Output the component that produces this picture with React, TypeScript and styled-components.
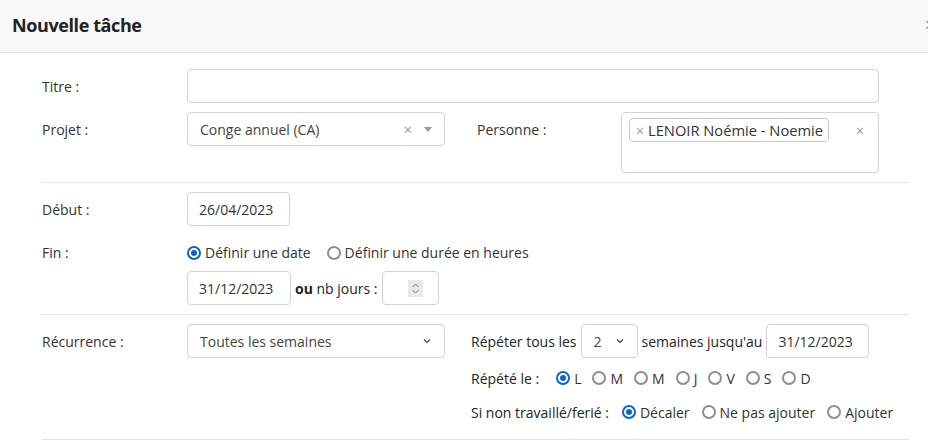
import React from "react";
import styled, { createGlobalStyle } from "styled-components";

const Global = createGlobalStyle`
  html, body { margin: 0; padding: 0; background: #fff; }
  body { font-family: "Open Sans", "Noto Sans", sans-serif; font-size: 14px; color: #212529; overflow: hidden; }
  * { box-sizing: border-box; }
`;

const Modal = styled.div`
  width: 928px;
  height: 441px;
  overflow: hidden;
  background: #fff;
`;

const Header = styled.div`
  height: 53px;
  background: #f8f8f8;
  border-bottom: 1px solid #e5e5e5;
  display: flex;
  align-items: center;
  justify-content: space-between;
  padding: 0 0 3px 12px;
`;

const Title = styled.h4`
  margin: 0;
  font-size: 18px;
  font-weight: 700;
  letter-spacing: -0.4px;
  color: #222;
`;

const Close = styled.span`
  font-size: 20px;
  color: #999;
  margin-right: -8px;
  line-height: 1;
`;

const Body = styled.div`
  padding: 16px 19px 0 42px;
`;

const Section = styled.div<{ $pb?: number }>`
  border-bottom: 1px solid #e3e3e3;
  padding: 0 0 ${(p) => p.$pb ?? 9}px;
  margin-bottom: 9px;
`;

const Grid = styled.div`
  display: grid;
  grid-template-columns: 145px 258px 32px 144px 258px;
  row-gap: 9px;
  align-items: start;
`;

const Label = styled.div<{ $h?: number }>`
  height: ${(p) => p.$h ?? 34}px;
  display: flex;
  align-items: center;
  color: #333;
  white-space: nowrap;
`;

const Input = styled.div<{ $w?: number; $h?: number; $span?: string }>`
  ${(p) => (p.$span ? `grid-column: ${p.$span};` : "")}
  width: ${(p) => (p.$w ? `${p.$w}px` : "auto")};
  height: ${(p) => p.$h ?? 34}px;
  border: 1px solid #cfd4da;
  border-radius: 4px;
  background: #fff;
  display: flex;
  align-items: center;
  padding: 0 11px;
  color: #333;
  white-space: nowrap;
  flex-shrink: 0;
`;

const Select2 = styled(Input)`
  padding: 0 12px;
  color: #444;
  justify-content: space-between;
`;

const Icons = styled.span`
  display: flex;
  align-items: center;
  gap: 12px;
  color: #999;
  font-size: 15px;
`;

const Caret = styled.span`
  width: 0;
  height: 0;
  border-left: 4px solid transparent;
  border-right: 4px solid transparent;
  border-top: 5px solid #999;
`;

const Multi = styled(Input)`
  align-items: flex-start;
  padding: 5px 14px 0 7px;
  justify-content: space-between;
`;

const Tag = styled.span`
  border: 1px solid #c8c8c8;
  border-radius: 4px;
  padding: 0 5px 0 6px;
  height: 24px;
  display: flex;
  align-items: center;
  gap: 4px;
  color: #333;
  font-size: 14.7px;
`;

const TagX = styled.span<{ $mt?: number }>`
  color: #999;
  font-size: 14px;
  margin-top: ${(p) => p.$mt ?? 0}px;
`;

const Row = styled.div<{ $h?: number; $gap?: number; $mt?: number }>`
  display: flex;
  align-items: center;
  min-height: ${(p) => p.$h ?? 34}px;
  gap: ${(p) => p.$gap ?? 4}px;
  margin-top: ${(p) => p.$mt ?? 0}px;
  white-space: nowrap;
`;

const FieldRow = styled.div<{ $mt?: number }>`
  display: flex;
  align-items: flex-start;
  margin-top: ${(p) => p.$mt ?? 0}px;
`;

const LabelCol = styled.div`
  width: 145px;
  flex-shrink: 0;
`;

const Col = styled.div<{ $ml?: number }>`
  display: flex;
  flex-direction: column;
  margin-left: ${(p) => p.$ml ?? 0}px;
`;

const Radios = styled.div<{ $gap: number }>`
  display: flex;
  align-items: center;
  gap: ${(p) => p.$gap}px;
`;

const RadioItem = styled.label`
  display: flex;
  align-items: center;
  gap: 4px;
  color: #333;
`;

const Dot = styled.span<{ $on?: boolean }>`
  width: 14px;
  height: 14px;
  border-radius: 50%;
  border: ${(p) => (p.$on ? "2px solid #0b63d6" : "2px solid #8e8e96")};
  display: inline-flex;
  align-items: center;
  justify-content: center;
  flex-shrink: 0;
  &::after {
    content: "";
    width: 6px;
    height: 6px;
    border-radius: 50%;
    background: ${(p) => (p.$on ? "#0b63d6" : "transparent")};
  }
`;

const Spin = styled.span`
  width: 15px;
  height: 17px;
  background: #e9e9ed;
  display: flex;
  align-items: center;
  justify-content: center;
  margin-left: auto;
  margin-right: 4px;
`;

const Lead = styled.span<{ $mr?: number }>`
  margin-right: ${(p) => p.$mr ?? 0}px;
`;

const Chevron = ({ size = 10 }: { size?: number }) => (
  <svg width={size} height={size} viewBox="0 0 10 10">
    <path d="M2 3.5 L5 6.5 L8 3.5" fill="none" stroke="#444" strokeWidth="1.2" />
  </svg>
);

const Radio = ({ on, children }: { on?: boolean; children: React.ReactNode }) => (
  <RadioItem>
    <Dot $on={on} />
    {children}
  </RadioItem>
);

export default function App() {
  return (
    <>
      <Global />
      <Modal>
        <Header>
          <Title>Nouvelle tâche</Title>
          <Close>×</Close>
        </Header>
        <Body>
          <Section>
            <Grid>
              <Label>Titre :</Label>
              <Input $span="2 / 6" />
              <Label>Projet :</Label>
              <Select2>
                Conge annuel (CA)
                <Icons>
                  <span>×</span>
                  <Caret />
                </Icons>
              </Select2>
              <span />
              <Label>Personne :</Label>
              <Multi $h={61}>
                <Tag>
                  <TagX>×</TagX>LENOIR Noémie - Noemie
                </Tag>
                <TagX $mt={3}>×</TagX>
              </Multi>
            </Grid>
          </Section>

          <Section>
            <FieldRow $mt={1}>
              <LabelCol>
                <Label>Début :</Label>
              </LabelCol>
              <Input $w={103}>26/04/2023</Input>
            </FieldRow>
            <FieldRow $mt={9}>
              <LabelCol>
                <Label $h={35}>Fin :</Label>
              </LabelCol>
              <Col>
                <Row $h={35}>
                  <Radios $gap={16}>
                    <Radio on>Définir une date</Radio>
                    <Radio>Définir une durée en heures</Radio>
                  </Radios>
                </Row>
                <Row $mt={1}>
                  <Input $w={104}>31/12/2023</Input>
                  <span>
                    <b>ou</b> nb jours :
                  </span>
                  <Input $w={57}>
                    <Spin>
                      <svg width="9" height="13" viewBox="0 0 9 13">
                        <path d="M1.5 5 L4.5 2 L7.5 5 M1.5 8 L4.5 11 L7.5 8" fill="none" stroke="#777" strokeWidth="1" />
                      </svg>
                    </Spin>
                  </Input>
                </Row>
              </Col>
            </FieldRow>
          </Section>

          <Section $pb={13}>
            <FieldRow>
              <LabelCol>
                <Label>Récurrence :</Label>
              </LabelCol>
              <Select2 $w={258}>
                Toutes les semaines
                <Chevron />
              </Select2>
              <Col $ml={26}>
                <Row>
                  Répéter tous les
                  <Select2 $w={57}>
                    2
                    <Chevron />
                  </Select2>
                  semaines jusqu'au
                  <Input $w={103}>31/12/2023</Input>
                </Row>
                <Row $h={28} $mt={6} $gap={0}>
                  <Lead $mr={17}>Répété le :</Lead>
                  <Radios $gap={11}>
                    <Radio on>L</Radio>
                    <Radio>M</Radio>
                    <Radio>M</Radio>
                    <Radio>J</Radio>
                    <Radio>V</Radio>
                    <Radio>S</Radio>
                    <Radio>D</Radio>
                  </Radios>
                </Row>
                <Row $h={28} $mt={6} $gap={0}>
                  <Lead $mr={13}>Si non travaillé/ferié :</Lead>
                  <Radios $gap={12}>
                    <Radio on>Décaler</Radio>
                    <Radio>Ne pas ajouter</Radio>
                    <Radio>Ajouter</Radio>
                  </Radios>
                </Row>
              </Col>
            </FieldRow>
          </Section>
        </Body>
      </Modal>
    </>
  );
}
